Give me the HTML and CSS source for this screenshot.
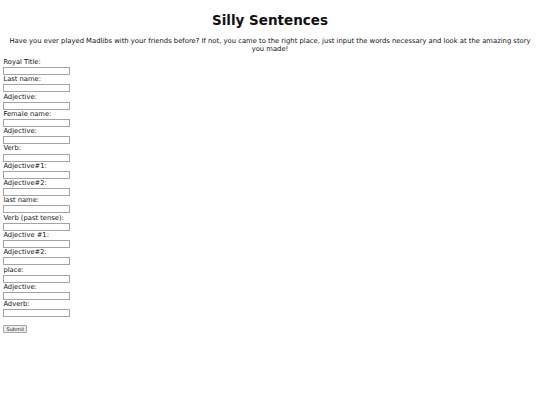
FILE: index.html
```html
<!DOCTYPE html>
<html>
<head>
<meta charset="utf-8">
<title>Silly Sentences</title>
<link rel="stylesheet" href="styles.css">
</head>
<body>
<h1 class="title">Silly Sentences</h1>
<p class="intro">Have you ever played Madlibs with your friends before? If not, you came to the right place, just input the words necessary and look at the amazing story you made!</p>
<form class="madlib">
<label class="field">Royal Title:<input type="text" class="entry"></label>
<label class="field">Last name:<input type="text" class="entry"></label>
<label class="field">Adjective:<input type="text" class="entry"></label>
<label class="field">Female name:<input type="text" class="entry"></label>
<label class="field">Adjective:<input type="text" class="entry"></label>
<label class="field">Verb:<input type="text" class="entry"></label>
<label class="field">Adjective#1:<input type="text" class="entry"></label>
<label class="field">Adjective#2:<input type="text" class="entry"></label>
<label class="field">last name:<input type="text" class="entry"></label>
<label class="field">Verb (past tense):<input type="text" class="entry"></label>
<label class="field">Adjective #1:<input type="text" class="entry"></label>
<label class="field">Adjective#2:<input type="text" class="entry"></label>
<label class="field">place:<input type="text" class="entry"></label>
<label class="field">Adjective:<input type="text" class="entry"></label>
<label class="field">Adverb:<input type="text" class="entry"></label>
<button type="button" class="submit">Submit</button>
</form>
</body>
</html>
```
FILE: styles.css
```css
body {
  margin: 3.375px;
  font-family: "DejaVu Sans", Verdana, sans-serif;
  font-size: 6.75px;
  color: #111;
  background: #fff;
}
.title {
  text-align: center;
  font-size: 13.5px;
  font-weight: bold;
  margin: 8.86px 0;
}
.intro {
  text-align: center;
  font-size: 6.813px;
  margin: 6.75px 0 5.9px;
}
.madlib {
  display: flex;
  flex-direction: column;
  align-items: flex-start;
}
.field {
  display: flex;
  flex-direction: column;
  align-items: flex-start;
  line-height: 7.85px;
}
.entry {
  box-sizing: border-box;
  width: 67px;
  height: 8px;
  margin: 0.2px 0 1.27px;
  padding: 0 1px;
  border: 1px solid #a4a4a4;
  font-family: "DejaVu Sans", sans-serif;
  font-size: 5.5px;
  background: #fff;
}
.submit {
  box-sizing: border-box;
  margin-top: 7px;
  width: 24px;
  height: 8px;
  padding: 0 1px;
  border: 1px solid #a4a4a4;
  border-radius: 1px;
  background: #efefef;
  font-family: "DejaVu Sans", sans-serif;
  font-size: 5px;
  line-height: 6px;
  color: #222;
}
```
